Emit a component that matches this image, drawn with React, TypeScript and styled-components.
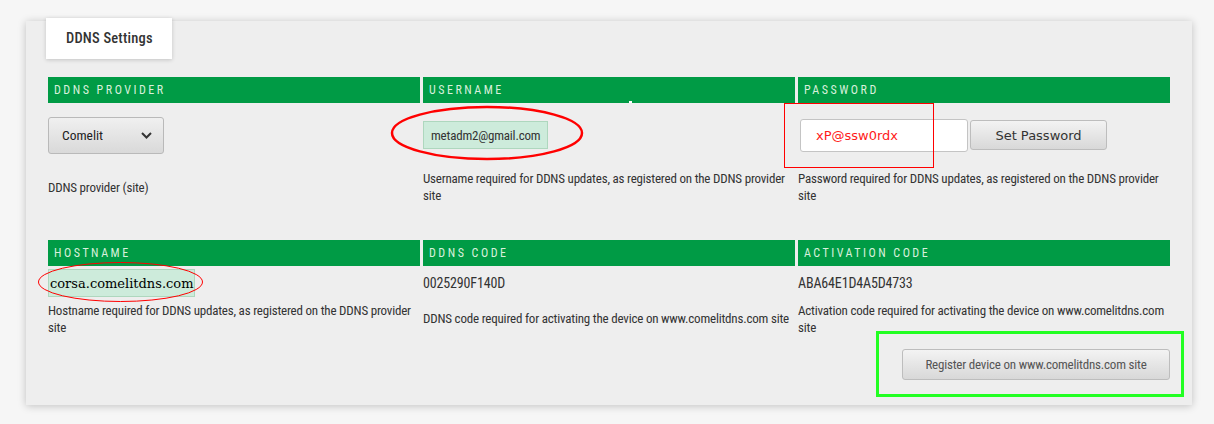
import React from "react";
import styled, { createGlobalStyle } from "styled-components";

const GlobalStyle = createGlobalStyle`
  html, body { margin: 0; padding: 0; background: #f6f6f6; }
  body { font-family: "Roboto", "Liberation Sans", Arial, sans-serif; font-stretch: 75%; }
  * { box-sizing: border-box; }
`;

const narrow = `"Roboto", "Liberation Sans", Arial, sans-serif`;

const Page = styled.div`
  width: 1214px;
  height: 424px;
  padding: 21px 0 0 26px;
`;

const Panel = styled.div`
  display: flow-root;
  width: 1166px;
  height: 384px;
  background: #eeeeee;
  box-shadow: 0 1px 8px rgba(0, 0, 0, 0.22);
  padding: 0 22px 0 22px;
`;

const Tab = styled.div`
  margin: -3px 0 0 -2px;
  width: 126px;
  height: 41px;
  background: #ffffff;
  box-shadow: 0 1px 4px rgba(0, 0, 0, 0.18);
  display: flex;
  align-items: center;
  padding-left: 20px;
  font-family: ${narrow};
  font-stretch: 75%;
  font-weight: 500;
  font-size: 14.5px;
  letter-spacing: 0.2px;
  color: #333;
`;

const Section = styled.div<{ $top: number }>`
  margin-top: ${(p) => p.$top}px;
  display: grid;
  grid-template-columns: 372px 372px 372px;
  column-gap: 3px;
`;

const Header = styled.div`
  position: relative;
  height: 26px;
  background: #009b45;
  color: #d8f0dc;
  font-family: ${narrow};
  font-stretch: 75%;
  font-size: 12px;
  letter-spacing: 2.5px;
  display: flex;
  align-items: center;
  padding-left: 6px;
`;

const Tick = styled.span`
  position: absolute;
  left: 206px;
  bottom: 0;
  width: 3px;
  height: 2px;
  background: #ffffff;
`;

const Cell = styled.div<{ $h: number }>`
  position: relative;
  height: ${(p) => p.$h}px;
  display: flex;
  align-items: center;
  font-family: ${narrow};
  font-stretch: 75%;
  font-size: 14px;
  letter-spacing: -0.15px;
  color: #333;
`;

const Desc = styled.div`
  font-family: ${narrow};
  font-stretch: 75%;
  font-size: 13px;
  letter-spacing: -0.2px;
  line-height: 17px;
  color: #333;
`;

const SelectBox = styled.div`
  width: 116px;
  height: 37px;
  border: 1px solid #b9b9b9;
  border-radius: 3px;
  background: linear-gradient(#f0f0f0, #d9d9d9);
  display: flex;
  align-items: center;
  justify-content: space-between;
  padding: 0 11px 0 13px;
  font-family: ${narrow};
  font-stretch: 75%;
  font-size: 13.5px;
  letter-spacing: 0;
  color: #222;
`;

const ReadField = styled.div<{ $serif?: boolean }>`
  height: 28px;
  display: flex;
  align-items: center;
  background: #cdebdb;
  border: 1px solid #aed7be;
  padding: ${(p) => (p.$serif ? "0 1px" : "0 7px")};
  font-family: ${(p) => (p.$serif ? `"DejaVu Serif", serif` : narrow)};
  font-stretch: ${(p) => (p.$serif ? "100%" : "75%")};
  font-size: 13px;
  letter-spacing: ${(p) => (p.$serif ? "0" : "-0.2px")};
  color: ${(p) => (p.$serif ? "#000" : "#333")};
`;

const PasswordInput = styled.div`
  width: 168px;
  height: 33px;
  background: #fff;
  border: 1px solid #c4c4c4;
  border-radius: 3px;
  display: flex;
  align-items: center;
  padding-left: 15px;
  font-family: "DejaVu Sans", sans-serif;
  font-stretch: 100%;
  font-size: 13px;
  letter-spacing: 0;
  color: #ff1a1a;
`;

const GrayButton = styled.button<{ $w: number; $h: number; $font: string; $stretch: string; $size: number; $ls: number; $color: string }>`
  width: ${(p) => p.$w}px;
  height: ${(p) => p.$h}px;
  border: 1px solid #bdbdbd;
  border-radius: 3px;
  background: linear-gradient(#f3f3f3, #d8d8d8);
  font-family: ${(p) => p.$font};
  font-stretch: ${(p) => p.$stretch};
  font-size: ${(p) => p.$size}px;
  letter-spacing: ${(p) => p.$ls}px;
  color: ${(p) => p.$color};
  padding: 0;
  margin: 0;
  cursor: pointer;
`;

const PasswordRow = styled.div`
  display: flex;
  align-items: center;
  gap: 2px;
  margin-left: 2px;
`;

const Annot = styled.svg`
  position: absolute;
  overflow: visible;
  pointer-events: none;
`;

const RedRect = styled.div`
  position: absolute;
  left: -14px;
  top: 0;
  width: 150px;
  height: 65px;
  border: 1px solid #ff0000;
  pointer-events: none;
`;

const Footer = styled.div`
  margin-top: 12px;
  display: flex;
  justify-content: flex-end;
`;

const Highlight = styled.div`
  position: relative;
`;

const GreenFrame = styled.div`
  position: absolute;
  left: -26px;
  top: -18px;
  right: -14px;
  bottom: -17px;
  border: 3px solid #22ff22;
  pointer-events: none;
`;

const Chevron = () => (
  <svg width="11" height="7" viewBox="0 0 11 7">
    <path d="M1 1 L5.5 5.5 L10 1" fill="none" stroke="#333" strokeWidth="2" />
  </svg>
);

export default function App() {
  return (
    <Page>
      <GlobalStyle />
      <Panel>
        <Tab>DDNS Settings</Tab>
        <Section $top={18}>
          <Header>DDNS PROVIDER</Header>
          <Header>
            USERNAME
            <Tick />
          </Header>
          <Header>PASSWORD</Header>

          <Cell $h={64}>
            <SelectBox>
              Comelit
              <Chevron />
            </SelectBox>
          </Cell>
          <Cell $h={64}>
            <ReadField>metadm2@gmail.com</ReadField>
            <Annot style={{ left: -32, top: 3 }} width="192" height="54" viewBox="0 0 192 54">
              <ellipse cx="96" cy="27" rx="95" ry="26" fill="none" stroke="#ff0000" strokeWidth="2.5" />
            </Annot>
          </Cell>
          <Cell $h={64}>
            <PasswordRow>
              <PasswordInput>xP@ssw0rdx</PasswordInput>
              <GrayButton $w={137} $h={30} $font={`"DejaVu Sans", sans-serif`} $stretch="100%" $size={13} $ls={0} $color="#333">
                Set Password
              </GrayButton>
            </PasswordRow>
            <RedRect />
          </Cell>

          <Cell $h={40}>
            <Desc>DDNS provider (site)</Desc>
          </Cell>
          <Cell $h={40}>
            <Desc>Username required for DDNS updates, as registered on the DDNS provider site</Desc>
          </Cell>
          <Cell $h={40}>
            <Desc>Password required for DDNS updates, as registered on the DDNS provider site</Desc>
          </Cell>
        </Section>

        <Section $top={33}>
          <Header>HOSTNAME</Header>
          <Header>DDNS CODE</Header>
          <Header>ACTIVATION CODE</Header>

          <Cell $h={34}>
            <ReadField $serif>corsa.comelitdns.com</ReadField>
            <Annot style={{ left: -10, top: -4 }} width="165" height="40" viewBox="0 0 165 40">
              <ellipse cx="82.5" cy="20" rx="82" ry="19.5" fill="none" stroke="#ff0000" strokeWidth="1" />
            </Annot>
          </Cell>
          <Cell $h={34}>0025290F140D</Cell>
          <Cell $h={34}>ABA64E1D4A5D4733</Cell>

          <Cell $h={37}>
            <Desc>Hostname required for DDNS updates, as registered on the DDNS provider site</Desc>
          </Cell>
          <Cell $h={37}>
            <Desc>DDNS code required for activating the device on www.comelitdns.com site</Desc>
          </Cell>
          <Cell $h={37}>
            <Desc>Activation code required for activating the device on www.comelitdns.com site</Desc>
          </Cell>
        </Section>

        <Footer>
          <Highlight>
            <GrayButton $w={268} $h={31} $font={narrow} $stretch="75%" $size={13} $ls={-0.2} $color="#555">
              Register device on www.comelitdns.com site
            </GrayButton>
            <GreenFrame />
          </Highlight>
        </Footer>
      </Panel>
    </Page>
  );
}
